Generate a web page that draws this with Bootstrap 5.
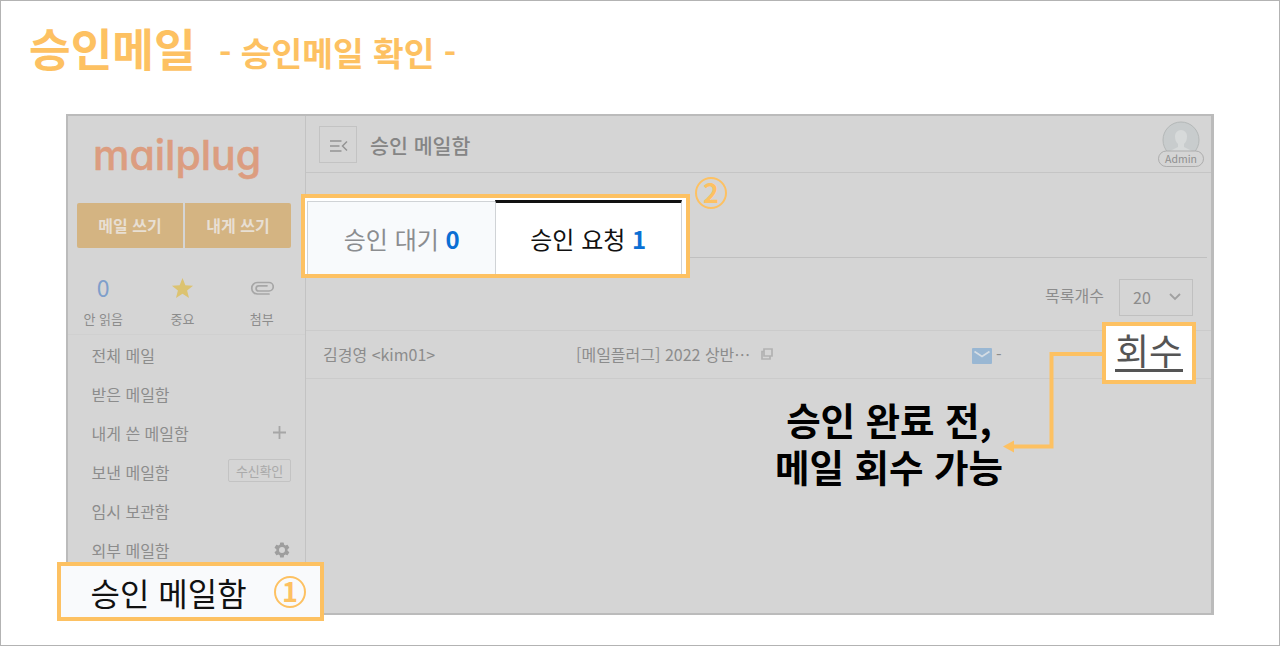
<!DOCTYPE html>
<html lang="ko">
  <head>
    <meta charset="utf-8" />
    <title>승인메일 확인</title>
    <meta name="viewport" content="width=device-width, initial-scale=1">

    <link href="https://cdn.jsdelivr.net/npm/bootstrap@5.3.0/dist/css/bootstrap.min.css" rel="stylesheet">
    <script src="https://cdn.jsdelivr.net/npm/bootstrap@5.3.0/dist/js/bootstrap.bundle.min.js"></script>

    <style>
      :root { --guide: #fdc162; --line: #c5c5c5; --dim: #8c8c8c; }
      body { font-family: "Noto Sans CJK KR", sans-serif; font-size: 16px; line-height: 1.5; color: var(--dim); }
      svg { display: block; }

      .slide { width: 1280px; height: 646px; border: 1px solid #b3b3b3; background: #fff; overflow: hidden; }
      .slide-head { height: 113px; padding: 10px 0 0 28px; color: var(--guide); line-height: 72px; }
      .slide-head h1 { font-size: 45.3px; line-height: 72px; width: 190px; }
      .slide-head h2 { font-size: 33.4px; line-height: 81px; }

      .screen { width: 1148px; height: 501px; margin-left: 65px; border: 2px solid #bbb; border-right-width: 3px; background: #d5d5d5; }

      /* sidebar */
      .side { width: 238px; border-right: 1px solid #c3c3c3; }
      .logo { height: 87px; padding-left: 25px; font: 500 41px/79px Inter, sans-serif; font-feature-settings: "cv11"; color: #dc9d80; -webkit-text-stroke: .5px #dc9d80; }
      .write { height: 45px; margin: 0 14px 0 9px; gap: 2px; }
      .write .btn { background: #d4b482; color: #e8dfd3; font-weight: 700; font-size: 16px; line-height: 45px; padding: 0; border: 0; }
      .write .btn:first-child { border-radius: 2px 0 0 2px; }
      .write .btn:last-child { border-radius: 0 2px 2px 0; }
      .counts { height: 87px; padding: 22px 8px 0 0; font-size: 13px; border-bottom: 1px solid #d0d0d0; }
      .counts > div { width: 71px; }
      .counts > div:nth-child(2) { width: 89px; }
      .counts .mark-box { height: 36px; font-size: 23px; line-height: 34px; color: #7f9fcb; }
      .counts span { line-height: 25px; }
      .boxes li { height: 39px; padding: 0 14px 0 23.5px; }
      .tag { font-size: 13px; line-height: 21px; border: 1px solid #c3c3c3; border-radius: 2px; color: #aaa; width: 63px; letter-spacing: -.2px; margin-bottom: 2px; }

      /* mail area */
      .topbar { height: 57px; border-bottom: 1px solid var(--line); padding: 0 6px 0 13px; }
      .fold { width: 38px; height: 37px; border: 1px solid #c3c3c3; }
      .topbar h3 { font-size: 20.6px; font-weight: 500; line-height: 30px; color: #858585; margin-left: 13px; padding-top: 1px; }
      .avatar { width: 48px; height: 50px; }
      .tabs-space { height: 85px; margin-right: 4px; border-bottom: 1px solid #c0c0c0; }
      .tools { height: 73px; padding: 6px 18px 0 0; gap: 15px; border-bottom: 1px solid #cbcbcb; }
      .tools .label { padding-bottom: 4px; }
      .pick { width: 74px; height: 37px; border: 1px solid #c0c0c0; padding: 0 11px 0 13px; }
      .mail-row { height: 48px; padding: 0 0 2px 17px; border-bottom: 1px solid #cbcbcb; }
      .mail-row .who { width: 253px; }
      .mail-row .subject { width: 396px; gap: 11px; }

      /* highlighted boxes over the screen */
      .hl { position: absolute; border: 4px solid var(--guide); background: #fff; }
      .hl-menu { left: -11px; top: 446px; width: 267px; height: 59px; background: #f9fafc; color: #111; font-size: 32px; line-height: 48px; padding: 0 14px 0 29.5px; }
      .hl-tabs { left: 233px; top: 78px; width: 389px; height: 84px; padding: 2px 4px 0 2px; font-size: 24px; }
      .hl-tabs > div { width: 188px; height: 74px; line-height: 70px; border: 1px solid #d0d3d6; border-bottom: 0; }
      .hl-tabs > .waiting { background: #f8fafc; color: #8b8d90; border-right: 0; padding: 2px 0 0 1px; margin-top: 1px; height: 73px; }
      .hl-tabs > .asked { color: #111; border-top: 3px solid #111; padding-top: 1px; }
      .hl-tabs b { color: #0b6fd4; }
      .hl-back { left: 1034px; top: 206px; width: 94px; height: 62px; color: #555; font-size: 36.5px; line-height: 50px; }
      .hl-back span { border-bottom: 3px solid #555; height: 46px; line-height: 47px; }
      .num { width: 32px; height: 32px; border: 2.7px solid var(--guide); border-radius: 50%; color: var(--guide); font-weight: 700; font-size: 27px; line-height: 25px; text-align: center; }
      .num-two { position: absolute; left: 627px; top: 61px; }
      .arrow { position: absolute; left: 932px; top: 230px; }
      .note { position: absolute; left: 696px; top: 279px; width: 250px; color: #000; font-size: 37.5px; font-weight: 700; line-height: 47px; }
    </style>
  </head>
  <body>
    <div class="slide">
      <div class="slide-head d-flex">
        <h1 class="fw-bold m-0">승인메일</h1>
        <h2 class="fw-bold m-0">- 승인메일 확인 -</h2>
      </div>

      <div class="screen d-flex position-relative">
        <div class="side flex-shrink-0">
          <div class="logo">mailplug</div>
          <div class="write d-flex">
            <button class="btn flex-fill">메일 쓰기</button>
            <button class="btn flex-fill">내게 쓰기</button>
          </div>
          <div class="counts d-flex text-center">
            <div><div class="mark-box">0</div><span>안 읽음</span></div>
            <div>
              <div class="mark-box d-flex justify-content-center align-items-center">
                <svg width="23" height="23" viewBox="0 0 24 24"><path fill="#dcc371" d="M12 1l3 7.6 8 .5-6.200 5.100 2 7.800L12 17.600 5.200 22l2-7.800L1 9.100l8-.5z"/></svg>
              </div>
              <span>중요</span>
            </div>
            <div>
              <div class="mark-box d-flex justify-content-center align-items-center">
                <svg width="24" height="16" viewBox="0 0 24 16" fill="none" stroke="#a6a6a6" stroke-width="1.700" stroke-linecap="round"><path d="M19 14H7.500a5.750 5.750 0 0 1 0-11.500H19a4 4 0 0 1 0 8.500H8.700a2.600 2.600 0 0 1 0-5.200H17"/></svg>
              </div>
              <span>첨부</span>
            </div>
          </div>
          <ul class="boxes list-unstyled m-0">
            <li class="d-flex align-items-center">전체 메일</li>
            <li class="d-flex align-items-center">받은 메일함</li>
            <li class="d-flex align-items-center justify-content-between">내게 쓴 메일함
              <svg class="me-1" width="15" height="15" viewBox="0 0 15 15" stroke="#a6a6a6" stroke-width="1.800"><path d="M7.500 1v13M1 7.500h13"/></svg>
            </li>
            <li class="d-flex align-items-center justify-content-between">보낸 메일함 <span class="tag text-center">수신확인</span></li>
            <li class="d-flex align-items-center">임시 보관함</li>
            <li class="d-flex align-items-center justify-content-between">외부 메일함
              <svg width="18" height="18" viewBox="0 0 24 24" fill="#9e9e9e"><path d="M19.400 13a7.500 7.500 0 0 0 0-2l2.100-1.600a.5.5 0 0 0 .1-.7l-2-3.400a.5.5 0 0 0-.6-.2l-2.500 1a7.400 7.400 0 0 0-1.700-1l-.4-2.600a.5.5 0 0 0-.5-.5h-4a.5.5 0 0 0-.5.500L9 5.100a7.400 7.400 0 0 0-1.700 1l-2.500-1a.5.5 0 0 0-.6.200l-2 3.400a.5.5 0 0 0 .1.700L4.500 11a7.500 7.500 0 0 0 0 2l-2.200 1.600a.5.5 0 0 0-.1.700l2 3.400c.1.200.4.300.6.200l2.500-1a7.400 7.400 0 0 0 1.700 1l.4 2.600c0 .3.200.5.500.5h4c.300 0 .5-.2.500-.5l.4-2.600a7.400 7.400 0 0 0 1.700-1l2.500 1c.2.100.5 0 .6-.2l2-3.400a.5.5 0 0 0-.1-.7zM12 16a4 4 0 1 1 0-8 4 4 0 0 1 0 8z"/></svg>
            </li>
          </ul>
        </div>

        <div class="flex-grow-1">
          <div class="topbar d-flex align-items-center">
            <div class="fold d-flex align-items-center justify-content-center">
              <svg class="mt-1" width="19" height="14" viewBox="0 0 19 14" fill="none" stroke="#949494" stroke-width="1.500"><path d="M1 2h11.500M1 7h9.500M1 12h11.500M18 2.500L13.500 7l4.500 4.500"/></svg>
            </div>
            <h3 class="mb-0">승인 메일함</h3>
            <svg class="avatar ms-auto" viewBox="0 0 48 50">
              <circle cx="24" cy="21" r="18" fill="#c8cccd" stroke="#b4b8b8"/>
              <path d="M18 17a6 6 0 0 1 12 0c0 4-1 6-3 8v3l8 4H13l8-4v-3c-2-2-3-4-3-8z" fill="#d7dada"/>
              <rect x="1.500" y="32" width="45" height="15.500" rx="7.750" fill="#d5d5d5" stroke="#adadad"/>
              <text x="24" y="43.500" text-anchor="middle" font-size="10.500" fill="#8f8f8f">Admin</text>
            </svg>
          </div>
          <div class="tabs-space"></div>
          <div class="tools d-flex align-items-center justify-content-end">
            <span class="label">목록개수</span>
            <div class="pick d-flex align-items-center justify-content-between">
              <span>20</span>
              <svg width="12" height="8" viewBox="0 0 12 8" fill="none" stroke="#a0a0a0" stroke-width="1.800"><path d="M1 1l5 5 5-5"/></svg>
            </div>
          </div>
          <div class="mail-row d-flex align-items-center">
            <span class="who">김경영 &lt;kim01&gt;</span>
            <span class="subject d-flex align-items-center">[메일플러그] 2022 상반…
              <svg width="12" height="12" viewBox="0 0 12 12" fill="none" stroke="#b2b2b2" stroke-width="1.700"><path d="M3 1h8v7H3zM3 3.500H1V11h8V8.500"/></svg>
            </span>
            <svg class="mt-1" width="20" height="16" viewBox="0 0 20 16"><rect width="20" height="16" rx="1" fill="#99b7d3"/><path d="M2.500 3.500L10 8.500l7.500-5" fill="none" stroke="#d5dde4" stroke-width="1.800"/></svg>
            <span class="ms-1 ps-0">-</span>
          </div>
        </div>

        <div class="hl hl-menu d-flex justify-content-between align-items-center">
          <span>승인 메일함</span><span class="num">1</span>
        </div>
        <div class="hl hl-tabs d-flex text-center">
          <div class="waiting">승인 대기 <b>0</b></div>
          <div class="asked">승인 요청 <b>1</b></div>
        </div>
        <span class="num num-two">2</span>
        <div class="hl hl-back d-flex justify-content-center"><span>회수</span></div>
        <svg class="arrow" width="104" height="112" viewBox="0 0 104 112"><path d="M102 8H51.500V100.500H12" fill="none" stroke="#fdc162" stroke-width="4"/><path d="M3 100.500l11-6v12z" fill="#fdc162"/></svg>
        <div class="note text-center">승인 완료 전,<br>메일 회수 가능</div>
      </div>
    </div>
  </body>
</html>
